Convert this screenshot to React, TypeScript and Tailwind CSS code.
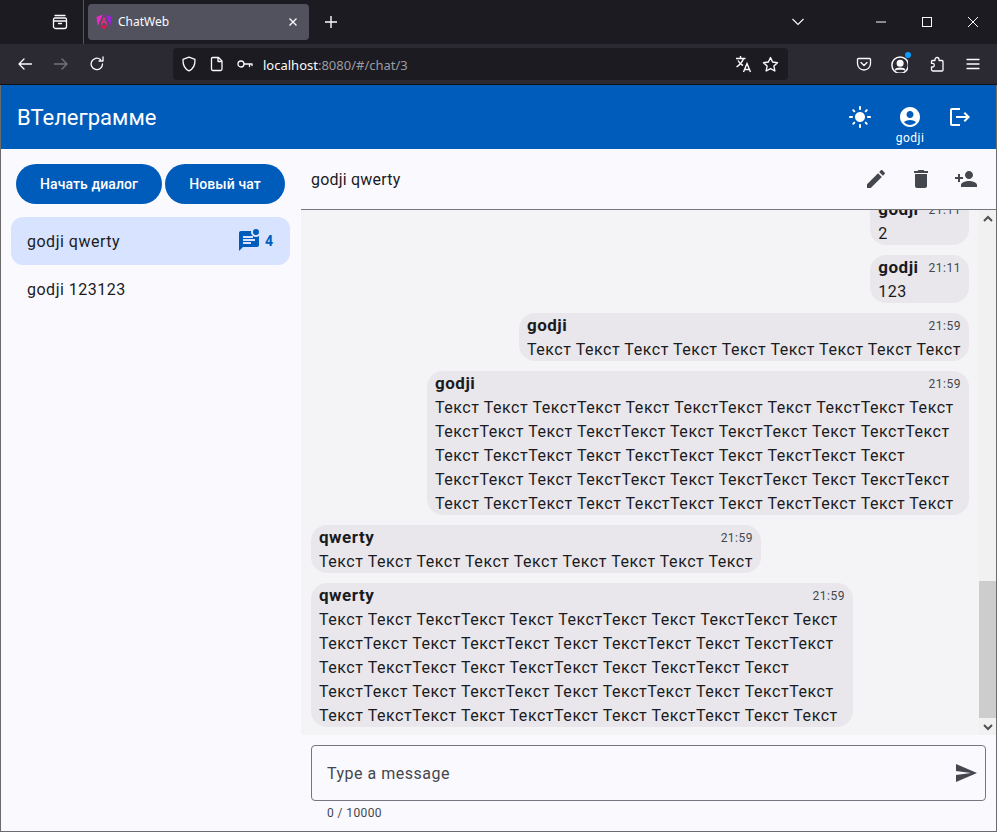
import React from "react";

const P = ({ d, size = 24, className = "" }: { d: string; size?: number; className?: string }) => (
  <svg width={size} height={size} viewBox="0 0 24 24" fill="currentColor" className={className}>
    <path d={d} />
  </svg>
);

const sun = "M12 7c-2.76 0-5 2.24-5 5s2.24 5 5 5 5-2.24 5-5-2.24-5-5-5zM2 13h2c.55 0 1-.45 1-1s-.45-1-1-1H2c-.55 0-1 .45-1 1s.45 1 1 1zm18 0h2c.55 0 1-.45 1-1s-.45-1-1-1h-2c-.55 0-1 .45-1 1s.45 1 1 1zM11 2v2c0 .55.45 1 1 1s1-.45 1-1V2c0-.55-.45-1-1-1s-1 .45-1 1zm0 18v2c0 .55.45 1 1 1s1-.45 1-1v-2c0-.55-.45-1-1-1s-1 .45-1 1zM5.99 4.58c-.39-.39-1.03-.39-1.41 0-.39.39-.39 1.03 0 1.41l1.06 1.06c.39.39 1.03.39 1.41 0s.39-1.03 0-1.41L5.99 4.58zm12.37 12.37c-.39-.39-1.03-.39-1.41 0-.39.39-.39 1.03 0 1.41l1.06 1.06c.39.39 1.03.39 1.41 0 .39-.39.39-1.03 0-1.41l-1.06-1.06zm1.06-10.96c.39-.39.39-1.03 0-1.41-.39-.39-1.03-.39-1.41 0l-1.06 1.06c-.39.39-.39 1.03 0 1.41s1.03.39 1.41 0l1.06-1.06zM7.05 18.36c.39-.39.39-1.03 0-1.41-.39-.39-1.03-.39-1.41 0l-1.06 1.06c-.39.39-.39 1.03 0 1.41s1.03.39 1.41 0l1.06-1.06z";
const account = "M12 2C6.48 2 2 6.48 2 12s4.48 10 10 10 10-4.48 10-10S17.52 2 12 2zm0 4c1.93 0 3.5 1.57 3.5 3.5S13.93 13 12 13s-3.5-1.57-3.5-3.5S10.07 6 12 6zm0 14c-2.03 0-4.43-.82-6.14-2.88C7.55 15.8 9.68 15 12 15s4.45.8 6.14 2.12C16.43 19.18 14.03 20 12 20z";
const logout = "M17 7l-1.41 1.41L18.17 11H8v2h10.17l-2.58 2.58L17 17l5-5zM4 5h8V3H4c-1.1 0-2 .9-2 2v14c0 1.1.9 2 2 2h8v-2H4V5z";
const edit = "M3 17.25V21h3.75L17.81 9.94l-3.75-3.75L3 17.25zM20.71 7.04c.39-.39.39-1.02 0-1.41l-2.34-2.34c-.39-.39-1.02-.39-1.41 0l-1.83 1.83 3.75 3.75 1.83-1.83z";
const trash = "M6 19c0 1.1.9 2 2 2h8c1.1 0 2-.9 2-2V7H6v12zM19 4h-3.5l-1-1h-5l-1 1H5v2h14V4z";
const personAdd = "M15 12c2.21 0 4-1.79 4-4s-1.79-4-4-4-4 1.79-4 4 1.79 4 4 4zm-9-2V7H4v3H1v2h3v3h2v-3h3v-2H6zm9 4c-2.67 0-8 1.34-8 4v2h16v-2c0-2.66-5.33-4-8-4z";
const send = "M2.01 21L23 12 2.01 3 2 10l15 2-15 2z";

const Line = ({ children, size = 16 }: { children: React.ReactNode; size?: number }) => (
  <svg width={size} height={size} viewBox="0 0 16 16" fill="none" stroke="currentColor" strokeWidth="1.3" strokeLinecap="round" strokeLinejoin="round">
    {children}
  </svg>
);

const long = [
  "Текст Текст ТекстТекст Текст ТекстТекст Текст ТекстТекст Текст",
  "ТекстТекст Текст ТекстТекст Текст ТекстТекст Текст ТекстТекст",
  "Текст ТекстТекст Текст ТекстТекст Текст ТекстТекст Текст",
  "ТекстТекст Текст ТекстТекст Текст ТекстТекст Текст ТекстТекст",
  "Текст ТекстТекст Текст ТекстТекст Текст ТекстТекст Текст Текст",
].join(" ");
const short = "Текст Текст Текст Текст Текст Текст Текст Текст Текст";

const messages = [
  { name: "godji", time: "21:11", text: "2", mine: true },
  { name: "godji", time: "21:11", text: "123", mine: true },
  { name: "godji", time: "21:59", text: short, mine: true },
  { name: "godji", time: "21:59", text: long, mine: true },
  { name: "qwerty", time: "21:59", text: short, mine: false },
  { name: "qwerty", time: "21:59", text: long, mine: false },
];

function BrowserChrome() {
  return (
    <div className="shrink-0 text-[#fbfbfe] [font-family:'Noto_Sans',sans-serif]">
      <div className="h-[44px] bg-[#1c1b22] flex items-center relative">
        <div className="w-[84px] h-full border-r border-[#55555c] flex items-center justify-end pr-[15px]">
          <Line>
            <path d="M3 1.5h10M1.5 5.5a1.5 1.5 0 0 1 1.5-1.5h10a1.5 1.5 0 0 1 1.5 1.5v7a2 2 0 0 1-2 2h-9a2 2 0 0 1-2-2zM1.5 7h13M6.5 9.5h3" />
          </Line>
        </div>
        <div className="ml-[4px] w-[221px] h-[36px] bg-[#52525e] rounded-[4px] flex items-center pl-[8px] pr-[8px]">
          <svg width="16" height="16" viewBox="0 0 16 16">
            <path d="M6.8 0.5 0.5 3 1.6 12.200Z" fill="#f02ac8" />
            <path d="M9.200 0.5 15.500 3 14.400 12.200Z" fill="#9a22d8" />
            <path d="M8 2.500 11.500 10.800H10L9.300 9H6.700L6 10.800H4.500ZM8 5.500 7.100 7.800H8.900Z" fill="#f02a8a" fillRule="evenodd" />
            <path d="M4.300 12 8 15.500 11.700 12 10.800 11.500H5.200Z" fill="#e8125c" />
          </svg>
          <span className="ml-[6px] text-[12px] leading-none flex-1">ChatWeb</span>
          <svg width="16" height="16" viewBox="0 0 16 16" fill="none" stroke="currentColor" strokeWidth="1.3">
            <path d="M4.500 4.500l7 7M11.500 4.500l-7 7" />
          </svg>
        </div>
        <svg width="16" height="16" viewBox="0 0 16 16" fill="none" stroke="currentColor" strokeWidth="1.4" className="ml-[14px]">
          <path d="M8 2v12M2 8h12" />
        </svg>
        <div className="flex-1" />
        <svg width="16" height="16" viewBox="0 0 16 16" fill="none" stroke="currentColor" strokeWidth="1.1" className="mr-[69px]">
          <path d="M2.500 5l5.500 5.500L13.500 5" />
        </svg>
        <svg width="12" height="12" viewBox="0 0 12 12" stroke="currentColor" strokeWidth="1" className="mr-[34px]">
          <path d="M1 6h10" />
        </svg>
        <svg width="12" height="12" viewBox="0 0 12 12" fill="none" stroke="currentColor" strokeWidth="1" className="mr-[34px]">
          <rect x="1.500" y="1.500" width="9" height="9" />
        </svg>
        <svg width="12" height="12" viewBox="0 0 12 12" stroke="currentColor" strokeWidth="1" className="mr-[18px]">
          <path d="M1 1l10 10M11 1L1 11" />
        </svg>
      </div>
      <div className="h-[41px] bg-[#2b2a33] border-b border-[#111] flex items-start pt-[4px]">
        <div className="w-[173px] h-[32px] flex items-center pl-[17px] gap-[20px]">
          <Line>
            <path d="M14.500 8h-12M7 3L2 8l5 5" />
          </Line>
          <span className="text-[#75747a]">
            <Line>
              <path d="M1.500 8h12M9 3l5 5-5 5" />
            </Line>
          </span>
          <Line>
            <path d="M13.500 8A5.700 5.700 0 1 1 11.500 3.600M14 1v4h-4" />
          </Line>
        </div>
        <div className="w-[615px] h-[32px] bg-[#1c1b22] rounded-[4px] flex items-center pl-[8px] pr-[9px]">
          <Line>
            <path d="M8 1.200l6 2.200c.2 5.500-1.800 9.500-6 11.400-4.200-1.900-6.200-5.900-6-11.400z" />
          </Line>
          <span className="ml-[12px]">
            <Line>
              <path d="M3.500 1.500h6l3.500 3.500v8a1.500 1.500 0 0 1-1.500 1.500h-8A1.500 1.500 0 0 1 2.500 13V2.500a1 1 0 0 1 1-1zM9 1.500V5.500h4" />
            </Line>
          </span>
          <span className="ml-[12px]">
            <Line>
              <circle cx="4" cy="8" r="3" />
              <path d="M7 8h8M12.500 8v2.500M15 8v1.500" />
            </Line>
          </span>
          <span className="ml-[10px] pt-[2px] text-[13px] leading-none text-[#fbfbfe] flex-1">
            localhost<span className="text-[#9b9ba0]">:8080/#/chat/3</span>
          </span>
          <span className="mr-[9px]">
            <svg width="18" height="18" viewBox="0 0 18 18" fill="none" stroke="currentColor" strokeWidth="1.4">
              <path d="M1 3.500h9.500M5.500 1v2.500M8.500 3.500C7.500 7 4.500 10 1.500 12M3 5.500c1 2 3 4 5 5M8.500 17l3.500-8.500L15.500 17M9.800 14.500h4.400" />
            </svg>
          </span>
          <Line size={17}>
            <path d="M8 1.500l2 4.200 4.600.6-3.400 3.200.9 4.600L8 11.800l-4.100 2.300.9-4.600L1.400 6.300 6 5.700z" />
          </Line>
        </div>
        <div className="flex-1 h-[32px] flex items-center pl-[68px]">
          <Line>
            <path d="M2.500 2.500h11a1 1 0 0 1 1 1v4a6.500 6.500 0 0 1-13 0v-4a1 1 0 0 1 1-1zM5 6.500l3 3 3-3" />
          </Line>
          <span className="ml-[18px] relative">
            <Line size={18}>
              <circle cx="9" cy="9" r="7.300" />
              <circle cx="9" cy="7.300" r="2.500" fill="currentColor" />
              <path d="M5 13.200c1-1.800 7-1.800 8 0" fill="currentColor" />
            </Line>
            <span className="absolute right-[-3px] top-[-3px] w-[6px] h-[6px] rounded-full bg-[#0a9dff]" />
          </span>
          <span className="ml-[21px]">
            <Line>
              <path d="M6 3.500a2 2 0 1 1 4 0v1h3a1 1 0 0 1 1 1v8.500a1 1 0 0 1-1 1H4a1.500 1.500 0 0 1-1.500-1.500V11h1a1.800 1.800 0 0 0 0-3.600h-1V5.500a1 1 0 0 1 1-1H6z" />
            </Line>
          </span>
          <span className="ml-[20px]">
            <Line>
              <path d="M2 3.500h12M2 8h12M2 12.500h12" />
            </Line>
          </span>
        </div>
      </div>
    </div>
  );
}

function Bubble({ name, time, text, mine }: { name: string; time: string; text: string; mine: boolean }) {
  return (
    <div className={`shrink-0 max-w-[542px] rounded-[16px] bg-[#e9e7eb] px-[8px] text-[#1a1b1f] text-[16px] leading-[24px] tracking-[0.53px] ${mine ? "self-end" : "self-start"}`}>
      <div className="flex justify-between gap-[10px] h-[25px]">
        <span className="font-bold text-[17px] tracking-[0.5px]">{name}</span>
        <span className="text-[12px] leading-[26px] tracking-[0.5px] text-[#44474e]">{time}</span>
      </div>
      <div className="-mb-[1px]">{text}</div>
    </div>
  );
}

export default function App() {
  return (
    <div className="w-[997px] h-[832px] flex flex-col overflow-hidden bg-[#faf9fd] text-[#1a1b1f] [font-family:Roboto,sans-serif]">
      <BrowserChrome />
      <div className="flex-1 min-h-0 flex flex-col border-x border-b border-[#6b6b6b]">
        <header className="h-[64px] shrink-0 bg-[#005cbb] text-white flex items-center pl-[16px] pr-[11px]">
          <span className="text-[22px] leading-[28px] flex-1 pt-[1px]">ВТелеграмме</span>
          <div className="flex items-center">
            <div className="w-[50px] flex justify-center">
              <P d={sun} />
            </div>
            <div className="w-[50px] flex flex-col items-center relative">
              <P d={account} />
              <span className="absolute top-[25px] text-[12px] leading-[16px] tracking-[0.5px]">godji</span>
            </div>
            <div className="w-[50px] flex justify-center">
              <P d={logout} />
            </div>
          </div>
        </header>
        <div className="flex-1 min-h-0 flex">
          <aside className="w-[300px] shrink-0 flex flex-col">
            <div className="flex gap-[3px] pl-[15px] pt-[15px]">
              <button className="w-[146px] h-[40px] rounded-full bg-[#005cbb] text-white text-[14px] font-medium tracking-[0.1px]">Начать диалог</button>
              <button className="w-[120px] h-[40px] rounded-full bg-[#005cbb] text-white text-[14px] font-medium tracking-[0.1px]">Новый чат</button>
            </div>
            <div className="mt-[13px] pl-[10px] pr-[11px] flex flex-col">
              <div className="h-[48px] rounded-[12px] bg-[#d7e3ff] flex items-center pl-[16px] pr-[17px] text-[16px] tracking-[0.5px]">
                <span className="flex-1 pt-[2px]">godji qwerty</span>
                <svg width="24" height="24" viewBox="0 0 24 24" fill="#005cbb" className="mr-[4px]">
                  <path fillRule="evenodd" d="M14.1 2H4c-1.1 0-2 .9-2 2v18l4-4h14c1.1 0 2-.9 2-2V6.980c-.84.63-1.870 1.020-3 1.020-2.760 0-5-2.240-5-5 0-.34.04-.68.1-1zM6 7h10v2H6zM6 10h12v2H6zM6 13h8v2H6z" />
                  <circle cx="19" cy="3" r="3" />
                </svg>
                <span className="text-[14px] font-bold text-[#005cbb] tracking-normal">4</span>
              </div>
              <div className="h-[48px] flex items-center pl-[16px] pt-[2px] text-[16px] tracking-[0.5px]">godji 123123</div>
            </div>
          </aside>
          <main className="flex-1 min-w-0 flex flex-col">
            <div className="h-[61px] shrink-0 border-b border-[#74777f] flex items-center pl-[10px] pr-[18px] text-[16px] tracking-[0.2px]">
              <span className="flex-1 pt-[2px]">godji qwerty</span>
              <div className="flex gap-[21px] text-[#44474e] -mt-[1px]">
                <P d={edit} />
                <P d={trash} />
                <P d={personAdd} />
              </div>
            </div>
            <div className="flex-1 min-h-0 flex">
              <div className="flex-1 min-w-0 bg-[#f4f3f6] overflow-hidden flex flex-col justify-end gap-[10px] pl-[10px] pr-[10px] pb-[8px]">
                {messages.map((m, i) => (
                  <Bubble key={i} {...m} />
                ))}
              </div>
              <div className="w-[17px] shrink-0 bg-[#f1f1f1] flex flex-col">
                <div className="h-[17px] flex items-center justify-center text-[#505050]">
                  <svg width="10" height="10" viewBox="0 0 10 10" fill="none" stroke="currentColor" strokeWidth="2">
                    <path d="M1 7l4-4 4 4" />
                  </svg>
                </div>
                <div className="flex-1" />
                <div className="h-[137px] bg-[#cdcdcd]" />
                <div className="h-[17px] flex items-center justify-center text-[#505050]">
                  <svg width="10" height="10" viewBox="0 0 10 10" fill="none" stroke="currentColor" strokeWidth="2">
                    <path d="M1 3l4 4 4-4" />
                  </svg>
                </div>
              </div>
            </div>
            <div className="h-[96px] shrink-0 pl-[10px] pr-[10px] pt-[10px]">
              <div className="h-[56px] rounded-[4px] border border-[#74777f] flex items-center pl-[15px] pr-[7px]">
                <input placeholder="Type a message" className="flex-1 min-w-0 outline-none bg-transparent text-[16px] tracking-[0.5px] pt-[2px] placeholder:text-[#44474e]" />
                <P d={send} className="text-[#44474e]" />
              </div>
              <div className="pl-[16px] pt-[4px] text-[12px] leading-[16px] tracking-[0.4px] text-[#44474e]">0 / 10000</div>
            </div>
          </main>
        </div>
      </div>
    </div>
  );
}
